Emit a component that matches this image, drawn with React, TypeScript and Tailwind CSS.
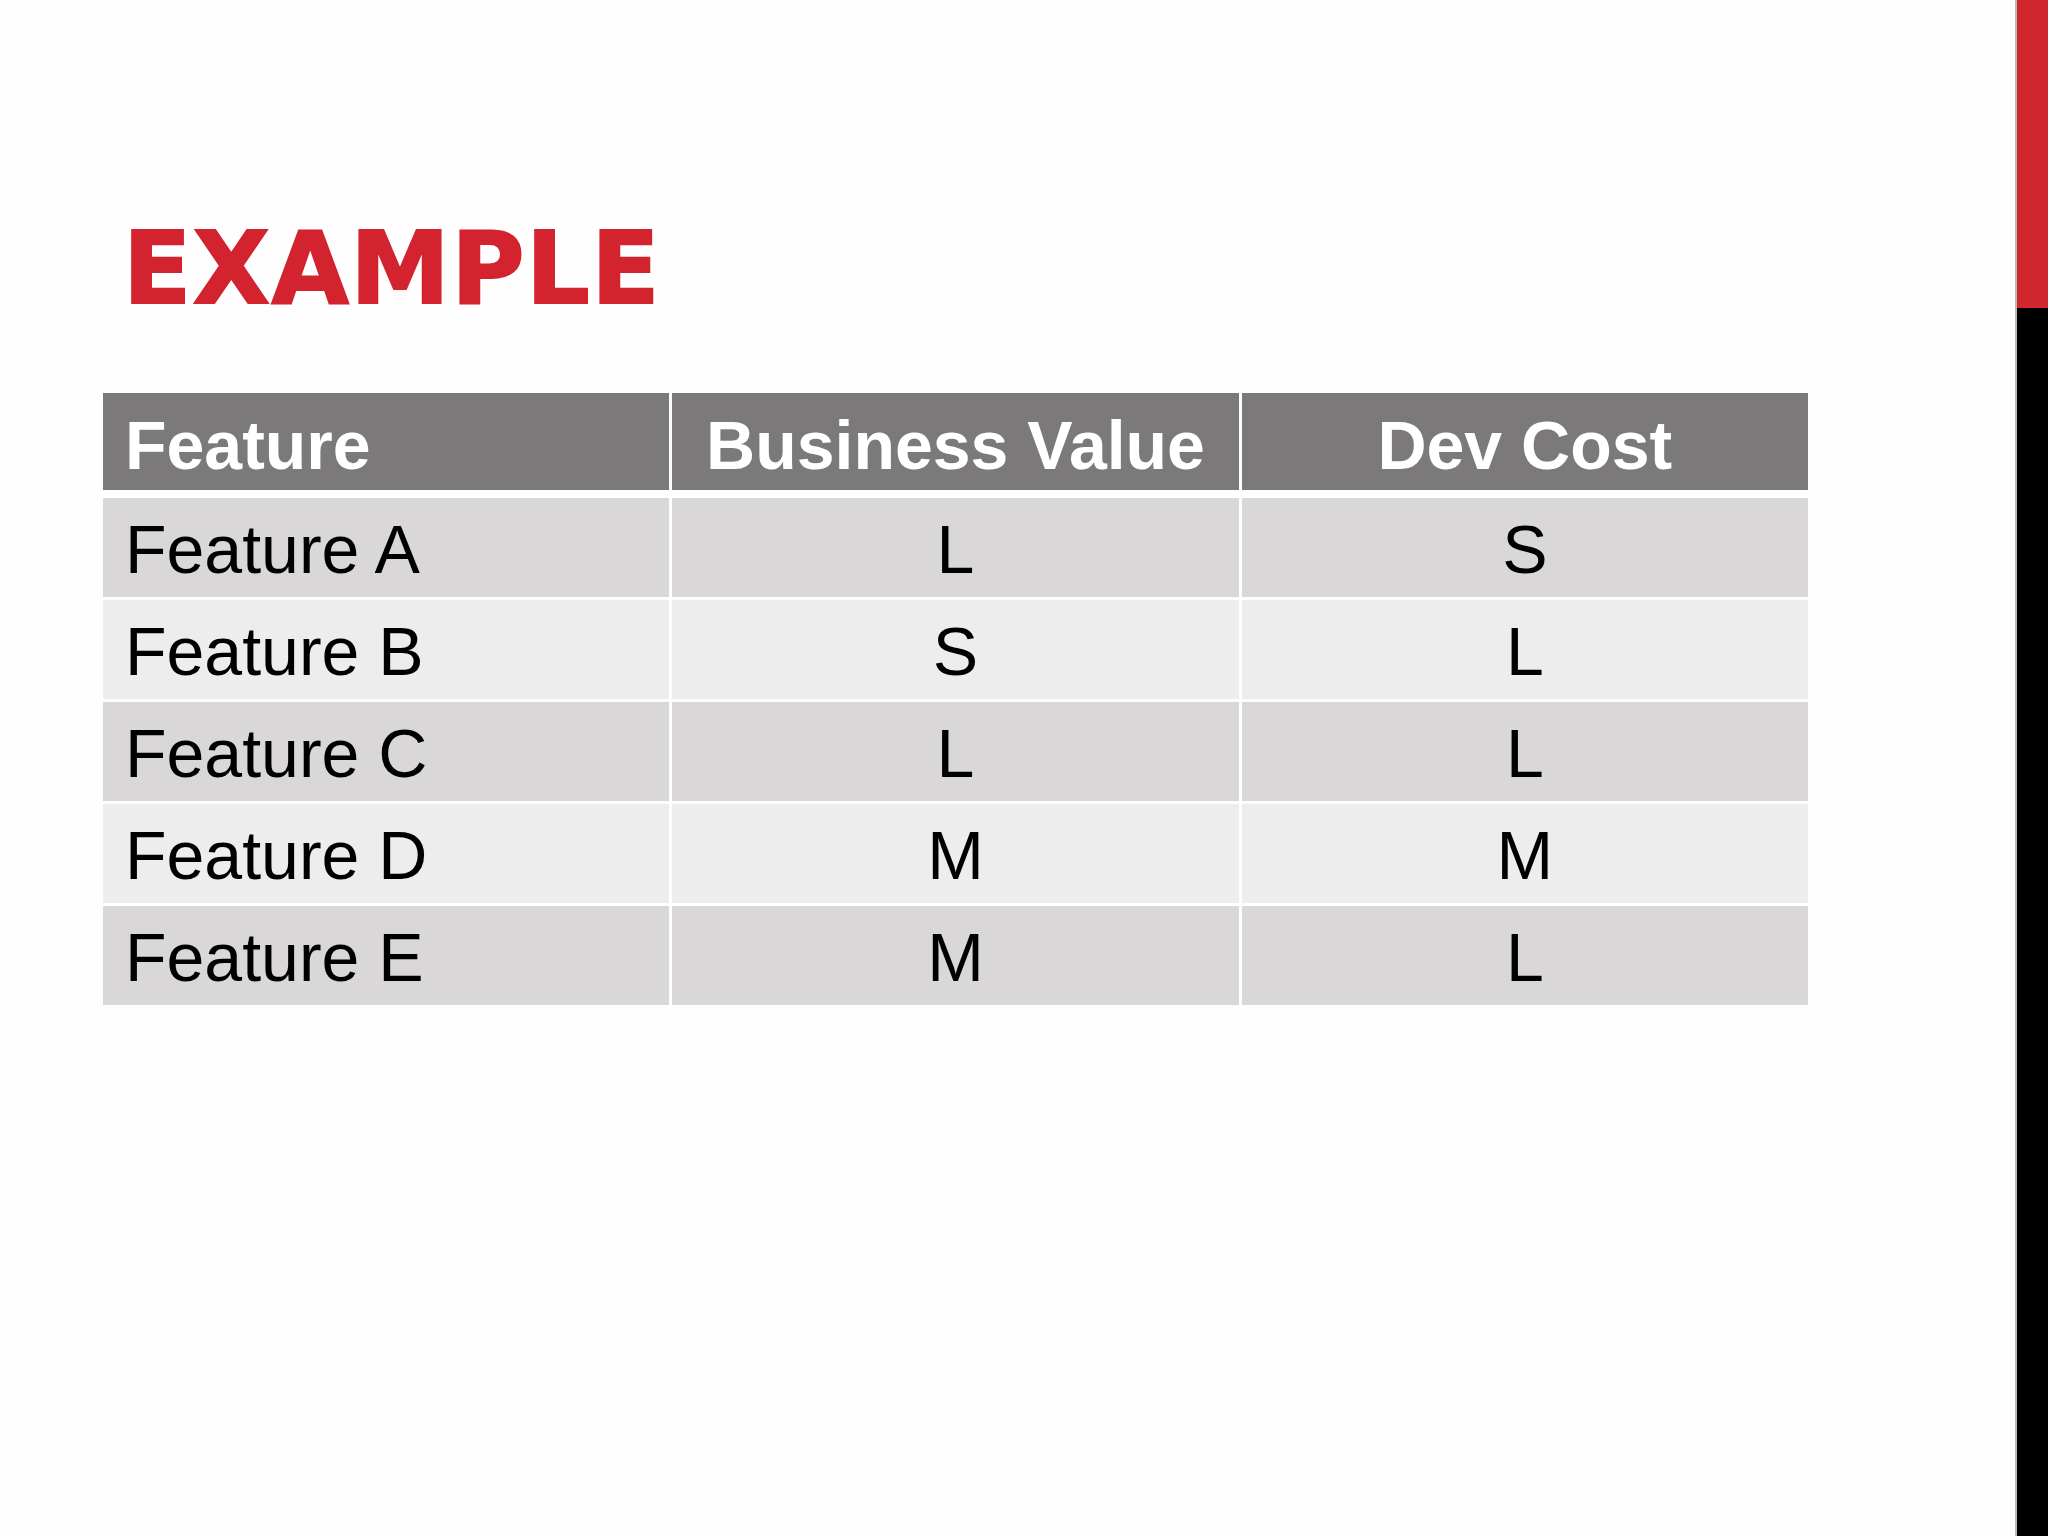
import React from "react";

const rows = [
  ["Feature A", "L", "S"],
  ["Feature B", "S", "L"],
  ["Feature C", "L", "L"],
  ["Feature D", "M", "M"],
  ["Feature E", "M", "L"],
];

export default function App() {
  return (
    <div
      className="w-[2048px] h-[1536px] bg-[#fefefe] flex overflow-hidden"
      style={{ fontFamily: '"Liberation Sans", Arial, sans-serif' }}
    >
      <main className="flex-1 flex flex-col pl-[103px] pt-[219px]">
        <h1
          className="text-[100px] leading-none font-bold text-[#d2232f] pl-[20px] tracking-[1.5px] [-webkit-text-stroke:2px_#d2232f]"
          style={{ fontFamily: '"DejaVu Sans", sans-serif' }}
        >
          EXAMPLE
        </h1>
        <div className="mt-[74px] w-[1705px] flex flex-col">
          <div className="grid grid-cols-3 gap-x-[3px] h-[97px]">
            <div className="bg-[#7b797a] flex items-center pl-[22px] pt-[6px] text-white font-bold text-[68px] leading-none">
              Feature
            </div>
            <div className="bg-[#7b797a] flex items-center justify-center pt-[6px] text-white font-bold text-[68px] leading-none">
              Business Value
            </div>
            <div className="bg-[#7b797a] flex items-center justify-center pt-[6px] text-white font-bold text-[68px] leading-none">
              Dev Cost
            </div>
          </div>
          <div className="mt-[8px] flex flex-col gap-y-[3px]">
            {rows.map((r, i) => {
              const bg = i % 2 === 0 ? "bg-[#d9d7d8]" : "bg-[#eeedee]";
              return (
                <div key={i} className="grid grid-cols-3 gap-x-[3px] h-[99px]">
                  <div className={`${bg} flex items-center pl-[22px] pt-[2px] text-black text-[68px] leading-none`}>
                    {r[0]}
                  </div>
                  <div className={`${bg} flex items-center justify-center pt-[2px] text-black text-[68px] leading-none`}>
                    {r[1]}
                  </div>
                  <div className={`${bg} flex items-center justify-center pt-[2px] text-black text-[68px] leading-none`}>
                    {r[2]}
                  </div>
                </div>
              );
            })}
          </div>
        </div>
      </main>
      <aside className="w-[33px] flex flex-col border-l-2 border-[#b9b9b9]">
        <div className="h-[308px] bg-[#d2262e]" />
        <div className="flex-1 bg-black" />
      </aside>
    </div>
  );
}
